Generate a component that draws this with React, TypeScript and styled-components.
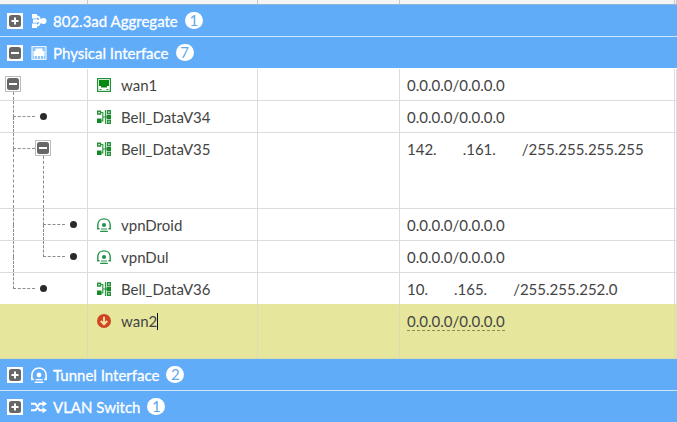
import React from "react";
import styled, { createGlobalStyle, css } from "styled-components";

const GlobalStyle = createGlobalStyle`
  body {
    margin: 0;
    background: #fff;
    color: #444;
    font: 15px/20px Lato, "Liberation Sans", sans-serif;
  }
`;

const guideLine = "1px dashed #8c8c8c";
const gridLine = "1px solid #dcdcdc";

const Table = styled.table`
  width: 100%;
  table-layout: fixed;
  border-collapse: separate;
  border-spacing: 0;
`;

const Col = styled.col<{ $width?: number }>`
  ${(p) => p.$width && `width: ${p.$width}px;`}
`;

const HeadCell = styled.th`
  height: 4px;
  padding: 0;
  background: #f5f5f5;
  border-right: 1px solid #c8c8c8;
  border-bottom: 1px solid #8cb4d8;
`;

const GroupCell = styled.th<{ $line?: boolean }>`
  height: 31px;
  padding: 0 7px;
  background: #60acf9;
  border-bottom: 1px solid ${(p) => (p.$line ? "#cfe6f8" : "#fff")};
  color: #fff;
  font-weight: 400;
  text-align: left;
`;

const GroupContent = styled.div`
  display: flex;
  align-items: center;
`;

const GroupIcon = styled.span`
  display: flex;
  width: 16px;
  margin: 0 6px 0 8px;
`;

const GroupTitle = styled.span`
  -webkit-text-stroke: 0.3px #fff;
`;

const Badge = styled.span`
  min-width: 18px;
  margin-left: 7px;
  border-radius: 9px;
  background: #fff;
  color: #60a8ec;
  font-size: 15px;
  line-height: 17px;
  text-align: center;
`;

const Toggle = styled.button<{ $framed?: boolean }>`
  display: flex;
  flex: none;
  box-sizing: border-box;
  width: 16px;
  height: 16px;
  padding: ${(p) => (p.$framed ? "1px" : "2px")};
  border: ${(p) => (p.$framed ? "1px solid #bcbcbc" : "0")};
  background: #fff;
  cursor: pointer;
`;

const Row = styled.tr<{ $selected?: boolean }>`
  background: ${(p) => (p.$selected ? "#e6e79c" : "#fff")};
`;

const Cell = styled.td<{ $last?: boolean; $selected?: boolean }>`
  padding: 6px 7px 0;
  border-right: ${gridLine};
  border-bottom: ${gridLine};
  vertical-align: top;
  white-space: nowrap;
  ${(p) => p.$last && "border-bottom-color: #e6e79c;"}
  ${(p) => p.$selected && "border-color: #dddcae;"}
`;

const TreeCell = styled(Cell)`
  padding: 0 0 0 5px;
`;

const Branches = styled.div<{ $height: number }>`
  display: flex;
  height: ${(p) => p.$height}px;
`;

const GuideSlot = styled.span`
  display: flex;
  width: 30px;
`;

const Guide = styled.span<{ $kind: GuideKind }>`
  display: grid;
  grid-template-rows: 16px 1fr;
  flex: none;
  width: 22px;
  padding-left: 8px;

  &::before {
    content: "";
    border-left: ${guideLine};
    ${(p) =>
      p.$kind !== "pass" &&
      css`
        border-bottom: ${guideLine};
      `}
  }

  &::after {
    content: "";
    ${(p) =>
      p.$kind !== "elbow" &&
      css`
        border-left: ${guideLine};
      `}
  }
`;

const Node = styled.span`
  display: flex;
  flex-direction: column;
  width: 16px;
  padding-top: 7px;
`;

const Stem = styled.span`
  flex: 1;
  margin-left: 8px;
  border-left: ${guideLine};
`;

const Dot = styled.span`
  width: 7px;
  height: 7px;
  margin: 5px;
  border-radius: 50%;
  background: #2a2a2a;
`;

const NameContent = styled.div`
  display: flex;
  align-items: center;
  gap: 10px;
  padding-left: 2px;
`;

const Name = styled.span`
  display: flex;
  align-items: center;
`;

const Caret = styled.span`
  height: 17px;
  border-left: 1px solid #111;
`;

const Address = styled.span<{ $editable?: boolean }>`
  display: inline-flex;
  gap: 26px;
  ${(p) =>
    p.$editable &&
    css`
      padding-top: 1px;
      border-bottom: 1px dashed #8b8b55;
      line-height: 17px;
    `}
`;

const Svg = ({ size = 14, children }: { size?: number; children: React.ReactNode }) => (
  <svg width={size} height={size} viewBox={`0 0 ${size} ${size}`} fill="none" aria-hidden="true">
    {children}
  </svg>
);

const ToggleButton = ({ open, framed, label }: { open?: boolean; framed?: boolean; label: string }) => (
  <Toggle type="button" $framed={framed} aria-expanded={!!open} aria-label={label}>
    <Svg size={12}>
      <rect width="12" height="12" rx="2.5" fill="#666" />
      <path d={open ? "M2 6H10" : "M2.5 6H9.5M6 2.5V9.5"} stroke="#fff" strokeWidth="2" />
    </Svg>
  </Toggle>
);

const AggregateIcon = () => (
  <Svg size={16}>
    <path d="M4 3.5H6Q8 3.5 8.5 5.5T11 8M4 8H12M4 12.5H6Q8 12.5 8.5 10.5T11 8" stroke="#fff" strokeWidth="2" />
    <path d="M1 1H6V5.5H1ZM2 6.3H6.5V9.7H2ZM1 10.5H6V15H1Z" fill="#fff" />
    <circle cx="12.5" cy="8" r="3" fill="#fff" />
  </Svg>
);

const PhysicalIcon = () => (
  <Svg size={16}>
    <path d="M1 1.5H15V14.5H1Z" fill="#fff" fillOpacity=".3" stroke="#e6f3ff" strokeWidth="1.2" />
    <path d="M2.5 11V6H4.5V3.5H11.5V6H13.5V11Z" fill="#fff" />
    <path d="M3.5 11V14M6.5 11V14M9.5 11V14M12.5 11V14" stroke="#e6f3ff" />
  </Svg>
);

const TunnelIcon = ({ color, size = 14 }: { color: string; size?: number }) => (
  <svg width={size} height={size} viewBox="0 0 14 14" fill="none" aria-hidden="true">
    <path d="M2.5 10.8H.8V7C.8 3.4 3.4 .9 7 .9S13.2 3.4 13.2 7V10.8H11.5" stroke={color} strokeWidth="1.4" />
    <circle cx="7" cy="7" r="2.1" fill={color} />
    <path d="M4 11H10M3.2 13.3H10.8" stroke={color} strokeWidth="1.2" />
  </svg>
);

const SwitchIcon = () => (
  <Svg size={16}>
    <path d="M0 4.8H4.5L8.5 11.2H13M0 11.2H4.5L8.5 4.8H13" stroke="#fff" strokeWidth="2" />
    <path d="M11.5 1.8L16 4.8L11.5 7.8ZM11.5 8.2L16 11.2L11.5 14.2Z" fill="#fff" />
  </Svg>
);

const PortIcon = () => (
  <Svg>
    <rect x=".6" y=".6" width="12.8" height="12.8" stroke="#25913a" strokeWidth="1.2" />
    <path d="M2 2H12V8H10V9.5H4V8H2Z" fill="#078a12" />
    <path d="M2.5 11.5H4.5M9.5 11.5H11.5" stroke="#25913a" />
  </Svg>
);

const VlanIcon = () => (
  <Svg>
    <path d="M4 2.5H5.8V11H3M8.5 0V14M5.8 7H11" stroke="#2f9746" strokeWidth="1.2" />
    <path d="M.7 1.2H3.5V4H.7ZM10.5 .7H13.3V3.5H10.5ZM10.5 10.5H13.3V13.3H10.5Z" stroke="#25913a" strokeWidth="1.4" />
    <path d="M0 8.5H4.5V13H0ZM9.6 4.8H14V9.2H9.6Z" fill="#148a25" />
  </Svg>
);

const DownIcon = () => (
  <Svg>
    <circle cx="7" cy="7" r="7" fill="#d04423" />
    <path d="M7 2.8V10M3.8 7L7 10.3L10.2 7" stroke="#f0dfa0" strokeWidth="2" />
  </Svg>
);

type GuideKind = "pass" | "tee" | "elbow";

interface Interface {
  name: string;
  icon: React.ReactNode;
  address: string[];
  guides: GuideKind[];
  node?: "dot" | "toggle";
  height?: number;
  selected?: boolean;
  last?: boolean;
}

const vpn = <TunnelIcon color="#25914a" />;

const interfaces: Interface[] = [
  { name: "wan1", icon: <PortIcon />, address: ["0.0.0.0/0.0.0.0"], guides: [], node: "toggle" },
  { name: "Bell_DataV34", icon: <VlanIcon />, address: ["0.0.0.0/0.0.0.0"], guides: ["tee"], node: "dot" },
  { name: "Bell_DataV35", icon: <VlanIcon />, address: ["142.", ".161.", "/255.255.255.255"], guides: ["tee"], node: "toggle", height: 75 },
  { name: "vpnDroid", icon: vpn, address: ["0.0.0.0/0.0.0.0"], guides: ["pass", "tee"], node: "dot" },
  { name: "vpnDul", icon: vpn, address: ["0.0.0.0/0.0.0.0"], guides: ["pass", "elbow"], node: "dot" },
  { name: "Bell_DataV36", icon: <VlanIcon />, address: ["10.", ".165.", "/255.255.252.0"], guides: ["elbow"], node: "dot", last: true },
  { name: "wan2", icon: <DownIcon />, address: ["0.0.0.0/0.0.0.0"], guides: [], height: 53, selected: true },
];

interface GroupProps {
  title: string;
  count: number;
  icon: React.ReactNode;
  open?: boolean;
  line?: boolean;
}

const Group = ({ title, count, icon, open, line }: GroupProps) => (
  <tr>
    <GroupCell colSpan={5} scope="rowgroup" $line={line}>
      <GroupContent>
        <ToggleButton open={open} label={`Toggle ${title}`} />
        <GroupIcon>{icon}</GroupIcon>
        <GroupTitle>{title}</GroupTitle>
        <Badge>{count}</Badge>
      </GroupContent>
    </GroupCell>
  </tr>
);

const InterfaceRow = ({ item }: { item: Interface }) => {
  const tone = { $last: item.last, $selected: item.selected };
  return (
    <Row $selected={item.selected}>
      <TreeCell {...tone}>
        <Branches $height={item.height ?? 31}>
          {item.guides.map((kind, i) => (
            <GuideSlot key={i}>
              <Guide $kind={kind} />
            </GuideSlot>
          ))}
          {item.node && (
            <Node>
              {item.node === "dot" ? (
                <Dot />
              ) : (
                <>
                  <ToggleButton open framed label={`Toggle ${item.name}`} />
                  <Stem />
                </>
              )}
            </Node>
          )}
        </Branches>
      </TreeCell>
      <Cell {...tone}>
        <NameContent>
          {item.icon}
          <Name>
            {item.name}
            {item.selected && <Caret />}
          </Name>
        </NameContent>
      </Cell>
      <Cell {...tone} />
      <Cell {...tone}>
        <Address $editable={item.selected}>
          {item.address.map((part) => (
            <span key={part}>{part}</span>
          ))}
        </Address>
      </Cell>
      <Cell {...tone} />
    </Row>
  );
};

export default function App() {
  return (
    <>
      <GlobalStyle />
      <Table>
        <colgroup>
          <Col $width={88} />
          <Col $width={170} />
          <Col $width={142} />
          <Col $width={275} />
          <Col />
        </colgroup>
        <thead>
          <tr>
            <HeadCell />
            <HeadCell />
            <HeadCell />
            <HeadCell />
            <HeadCell />
          </tr>
        </thead>
        <tbody>
          <Group title="802.3ad Aggregate" count={1} icon={<AggregateIcon />} line />
          <Group title="Physical Interface" count={7} icon={<PhysicalIcon />} open />
          {interfaces.map((item) => (
            <InterfaceRow key={item.name} item={item} />
          ))}
          <Group title="Tunnel Interface" count={2} icon={<TunnelIcon color="#fff" size={16} />} line />
          <Group title="VLAN Switch" count={1} icon={<SwitchIcon />} />
        </tbody>
      </Table>
    </>
  );
}
